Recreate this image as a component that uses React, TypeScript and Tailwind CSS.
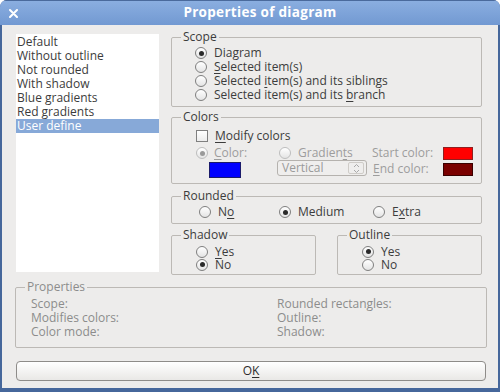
import React from "react";

function Radio({ checked = false, disabled = false }: { checked?: boolean; disabled?: boolean }) {
  return (
    <span
      className={
        "w-[12px] h-[12px] rounded-full border flex items-center justify-center shrink-0 bg-gradient-to-b from-white to-[#e4e4e4] " +
        (disabled ? "border-[#bdbdbd]" : "border-[#7f7f7f]")
      }
    >
      {checked && (
        <span className={"w-[5px] h-[5px] rounded-full " + (disabled ? "bg-[#9a9a9a]" : "bg-[#2a2a2a]")} />
      )}
    </span>
  );
}

function U({ children }: { children: React.ReactNode }) {
  return <span className="underline underline-offset-[2px]">{children}</span>;
}

function Group({
  title,
  className,
  children,
}: {
  title: string;
  className?: string;
  children: React.ReactNode;
}) {
  return (
    <fieldset className={"border border-[#bcb9b5] rounded-[2px] m-0 p-0 " + (className ?? "")}>
      <legend className="ml-[9px] px-[2px] leading-[14px] text-[#3c3c3c]">{title}</legend>
      {children}
    </fieldset>
  );
}

const items = ["Default", "Without outline", "Not rounded", "With shadow", "Blue gradients", "Red gradients", "User define"];

export default function App() {
  return (
    <div className="w-[500px] h-[392px] flex flex-col bg-[#46679b] rounded-t-[7px] overflow-hidden font-['Open_Sans',sans-serif] text-[12px] leading-[14px] text-[#3c3c3c]">
      {/* Title bar */}
      <div className="h-[25px] shrink-0 relative flex items-center justify-center pl-[20px] bg-gradient-to-b from-[#8aaee0] to-[#7299d2] border-t border-[#4a6a9c]">
        <svg className="absolute left-[9px] top-[8px]" width="9" height="9" viewBox="0 0 9 9">
          <path d="M1 1 L8 8 M8 1 L1 8" stroke="#ffffff" strokeWidth="2" strokeLinecap="round" />
        </svg>
        <span className="text-white font-bold text-[13.5px] leading-none tracking-[0.3px]">Properties of diagram</span>
      </div>

      {/* Body */}
      <div className="flex-1 mx-[2px] mb-[4px] bg-[#edeceb] flex flex-col pt-[5px]">
        <div className="flex pl-[14px] gap-[12px]">
          {/* List */}
          <div className="mt-[4px] w-[143px] h-[238px] bg-white flex flex-col pt-[1px]">
            {items.map((t, i) => (
              <div
                key={t}
                className={
                  "h-[14px] leading-[14px] pl-[1px] whitespace-nowrap " +
                  (i === 6 ? "bg-[#87a9d8] text-white" : "text-[#3c3c3c]")
                }
              >
                {t}
              </div>
            ))}
          </div>

          {/* Right column */}
          <div className="w-[311px] flex flex-col">
            <Group title="Scope" className="pt-[2px] pb-[4px]">
              <div className="flex flex-col pl-[23px]">
                <div className="h-[14px] flex items-center gap-[7px]"><Radio checked /><span>Dia<U>g</U>ram</span></div>
                <div className="h-[14px] flex items-center gap-[7px]"><Radio /><span><U>S</U>elected item(s)</span></div>
                <div className="h-[14px] flex items-center gap-[7px]"><Radio /><span>Selected <U>i</U>tem(s) and its siblings</span></div>
                <div className="h-[14px] flex items-center gap-[7px]"><Radio /><span>Selected item(s) and its <U>b</U>ranch</span></div>
              </div>
            </Group>

            <Group title="Colors" className="mt-[3px] pt-[5px] pb-[5px]">
              <div className="flex flex-col pl-[24px]">
                <div className="h-[14px] flex items-center gap-[7px]">
                  <span className="w-[12px] h-[12px] border border-[#7f7f7f] bg-gradient-to-b from-white to-[#ececec] shrink-0" />
                  <span><U>M</U>odify colors</span>
                </div>
                <div className="grid grid-cols-[81px_95px_71px_30px] mt-[3px] text-[#9d9d9d]">
                  <div className="h-[14px] flex items-center gap-[6px]"><Radio checked disabled /><span><U>C</U>olor:</span></div>
                  <div className="h-[14px] flex items-center gap-[7px] pl-[2px]"><Radio disabled /><span>Gradien<U>t</U>s</span></div>
                  <div className="h-[14px] flex items-center">Start color:</div>
                  <div className="h-[14px] flex items-center"><span className="w-[30px] h-[13px] bg-[#ff0000] border border-[#8f2020]" /></div>

                  <div className="h-[18px] pt-[2px] pl-[13px]"><span className="block w-[32px] h-[16px] bg-[#0000ff] border border-[#1a1a6a]" /></div>
                  <div className="h-[18px]">
                    <div className="w-[90px] h-[16px] rounded-[3px] border border-[#b5b2ae] bg-[#efeeed] flex items-center pl-[4px] text-[#9a9a9a]">
                      <span className="flex-1 leading-[14px] text-[12px]">Vertical</span>
                      <span className="w-[16px] h-[12px] mr-[2px] rounded-[2px] border border-[#cfccc8] flex items-center justify-center">
                        <svg width="9" height="11" viewBox="0 0 9 11">
                          <path d="M2 4 L4.5 1.5 L7 4 M2 7 L4.5 9.5 L7 7" stroke="#a8a8a8" strokeWidth="1" fill="none" />
                        </svg>
                      </span>
                    </div>
                  </div>
                  <div className="h-[18px] flex items-center pl-[1px]"><span><U>E</U>nd color:</span></div>
                  <div className="h-[18px] flex items-center"><span className="w-[30px] h-[13px] bg-[#7a0000] border border-[#3a0000]" /></div>
                </div>
              </div>
            </Group>

            <Group title="Rounded" className="mt-[5px] pt-[2px] pb-[4px]">
              <div className="flex pl-[27px] h-[14px] items-center">
                <div className="w-[80px] flex items-center gap-[7px]"><Radio /><span>N<U>o</U></span></div>
                <div className="w-[94px] flex items-center gap-[7px]"><Radio checked /><span>Medium</span></div>
                <div className="flex items-center gap-[7px]"><Radio /><span>E<U>x</U>tra</span></div>
              </div>
            </Group>

            <div className="flex gap-[21px] mt-[4px]">
              <Group title="Shadow" className="w-[145px] pt-[3px] pb-[3px]">
                <div className="flex flex-col pl-[24px] leading-[13px]">
                  <div className="h-[13px] flex items-center gap-[7px]"><Radio /><span><U>Y</U>es</span></div>
                  <div className="h-[13px] flex items-center gap-[7px]"><Radio checked /><span>No</span></div>
                </div>
              </Group>
              <Group title="Outline" className="w-[145px] pt-[3px] pb-[3px]">
                <div className="flex flex-col pl-[24px] leading-[13px]">
                  <div className="h-[13px] flex items-center gap-[7px]"><Radio checked /><span>Yes</span></div>
                  <div className="h-[13px] flex items-center gap-[7px]"><Radio /><span>No</span></div>
                </div>
              </Group>
            </div>
          </div>
        </div>

        {/* Properties */}
        <fieldset className="mt-[5px] ml-[13px] w-[472px] border border-[#bcb9b5] rounded-[2px] m-0 p-0 pt-[3px] pb-[8px] text-[#8c8c8c]">
          <legend className="ml-[9px] px-[2px] leading-[14px] text-[#8c8c8c]">Properties</legend>
          <div className="grid grid-cols-[246px_1fr] pl-[15px]">
            <div className="h-[14px] leading-[14px]">Scope:</div>
            <div className="h-[14px] leading-[14px]">Rounded rectangles:</div>
            <div className="h-[14px] leading-[14px]">Modifies colors:</div>
            <div className="h-[14px] leading-[14px]">Outline:</div>
            <div className="h-[14px] leading-[14px]">Color mode:</div>
            <div className="h-[14px] leading-[14px]">Shadow:</div>
          </div>
        </fieldset>

        {/* OK button */}
        <button className="mt-[13px] ml-[14px] w-[470px] h-[20px] rounded-[4px] border border-[#8e8c89] bg-gradient-to-b from-white to-[#e9e8e6] flex items-center justify-center text-[#2c2c2c] leading-none">
          <span>O<U>K</U></span>
        </button>
      </div>
    </div>
  );
}
